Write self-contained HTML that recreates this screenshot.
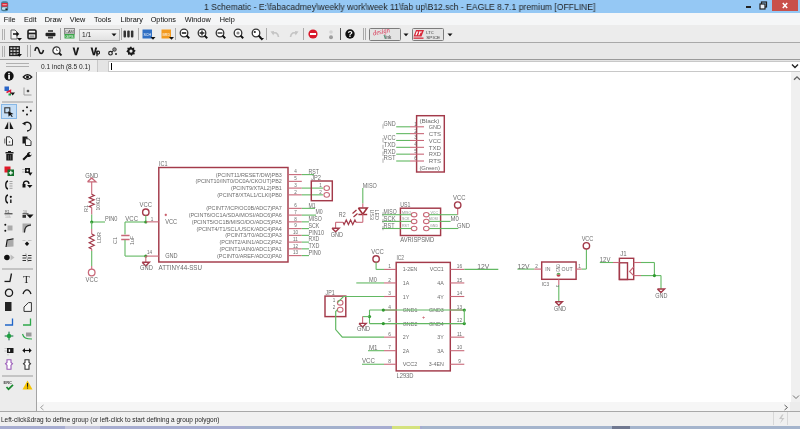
<!DOCTYPE html>
<html><head><meta charset="utf-8">
<style>
*{margin:0;padding:0;box-sizing:border-box}
html,body{width:800px;height:429px;overflow:hidden;background:#fff;font-family:"Liberation Sans",sans-serif}
.abs{will-change:transform}
svg{display:block}
.abs{position:absolute}
#title{left:0;top:0;width:800px;height:13px;background:#95c8f4}
#title .t{left:204px;top:1.8px;font-size:9.3px;color:#1e1e1e;white-space:nowrap;transform-origin:0 0;transform:scaleX(0.923)}
#close{left:772px;top:0;width:26px;height:11px;background:#c9504a}
#menu{left:0;top:13px;width:800px;height:12px;background:#f5f6f7}
#menu span{position:absolute;top:1.6px;font-size:7.3px;color:#0e0e0e}
#tb1{left:0;top:25px;width:800px;height:18px;background:#ececec;border-bottom:1px solid #a9a9a9}
#tb2{left:0;top:43px;width:800px;height:17px;background:#e8e8e8;border-bottom:1px solid #9a9a9a}
#cmd{left:36px;top:60px;width:764px;height:12px;background:#e4e4e4}
#left{left:0;top:60px;width:36.5px;height:352px;background:#ececec;border-right:1.5px solid #a4a4a4}
#canvas{left:37px;top:72px;width:754px;height:330px;background:#fff}
#vscroll{left:790.6px;top:72px;width:9.4px;height:330px;background:#f0f0f0}
#hscroll{left:37px;top:402px;width:753px;height:10px;background:#f6f6f6}
#corner{left:790px;top:402px;width:10px;height:10px;background:#ececec}
#status{left:0;top:411px;width:800px;height:15px;background:#f0f0f0;border-top:1.5px solid #a8a8a8}
#status .t{left:1px;top:4.3px;font-size:6.46px;color:#262626;white-space:nowrap}
#task{left:0;top:426px;width:800px;height:3px;background:#a6acd0}
</style></head><body>
<div id="title" class="abs">
  <svg class="abs" style="left:0;top:0" width="12" height="13"><rect x="1" y="1.2" width="7.2" height="10" rx="2.2" fill="#4a7f96"/><rect x="1.6" y="3" width="6" height="3.6" fill="#e0283a"/><rect x="2.5" y="4.2" width="4.2" height="1" fill="#f4b0b0"/><rect x="2" y="7.2" width="5.2" height="2.6" rx="1" fill="#bfe6f4"/><rect x="5.4" y="8.4" width="2" height="1.6" fill="#1a1a1a"/></svg>
  <div class="abs t">1 Schematic - E:\fabacadmey\weekly work\week 11\fab up\B12.sch - EAGLE 8.7.1 premium [OFFLINE]</div>
  <div class="abs" style="left:746px;top:6px;width:5px;height:1.5px;background:#222"></div>
  <svg class="abs" style="left:759px;top:1px" width="9" height="9"><rect x="2.5" y="1" width="5" height="5" fill="none" stroke="#222" stroke-width="1.2"/><rect x="1" y="3" width="5" height="5" fill="#e8f0f8" stroke="#222" stroke-width="1.2"/></svg>
  <div id="close" class="abs"><svg width="26" height="11"><path d="M10.8 3 L15.2 8 M15.2 3 L10.8 8" stroke="#fff" stroke-width="1.5"/></svg></div>
</div>
<div id="menu" class="abs">
  <span style="left:3.8px">File</span><span style="left:24px">Edit</span><span style="left:44.7px">Draw</span><span style="left:69.7px">View</span><span style="left:94px">Tools</span><span style="left:120.6px">Library</span><span style="left:150.7px">Options</span><span style="left:184.8px">Window</span><span style="left:219.8px">Help</span>
</div>
<div id="tb1" class="abs"><div class="abs" style="left:2px;top:3.5px;width:1px;height:11px;background:#b0b0b0"></div><div class="abs" style="left:4px;top:3.5px;width:1px;height:11px;background:#b0b0b0"></div><svg class="abs" style="left:10px;top:3.5px" width="13" height="12" viewBox="0 0 13 12"><path d="M1 1 H5 L7 3 V10 H1 Z" fill="#f6f6f6" stroke="#666" stroke-width="1"/><path d="M3 4.2 H6.5 V2.5 L9.3 5 L6.5 7.5 V5.8 H3Z" fill="#111"/><path d="M7 9 H12 L9.5 11.8Z" fill="#111"/></svg><svg class="abs" style="left:27px;top:3.5px" width="10" height="11" viewBox="0 0 10 11"><rect x="1" y="1" width="8" height="8.6" rx="1.2" fill="#fff" stroke="#1e1e1e" stroke-width="1.6"/><rect x="1" y="3.6" width="8" height="1.8" fill="#1e1e1e"/><rect x="2.6" y="6.3" width="4.8" height="2.4" fill="#9a9a9a"/></svg><svg class="abs" style="left:45px;top:4px" width="11" height="10" viewBox="0 0 11 10"><rect x="3" y="1" width="5" height="2" fill="#555"/><rect x="0.5" y="3.8" width="10" height="3.4" rx="1" fill="#222"/><rect x="3" y="7.5" width="5" height="2" fill="#444"/></svg><div class="abs" style="left:60px;top:3px;width:1px;height:12px;background:#aaa"></div><svg class="abs" style="left:64px;top:3px" width="11" height="11" viewBox="0 0 11 11"><rect x="0.5" y="0.5" width="10" height="5.5" fill="#dcdcdc" stroke="#777" stroke-width="0.8"/><text x="5.5" y="5" font-size="4" fill="#444" text-anchor="middle" font-family="Liberation Sans">CAM</text><rect x="0.5" y="6" width="10" height="4.5" fill="#3aa548"/><text x="5.5" y="9.8" font-size="3.8" fill="#fff" text-anchor="middle" font-family="Liberation Sans">GPS</text></svg><div class="abs" style="left:78.5px;top:3.5px;width:41px;height:11.5px;background:linear-gradient(#f4f4f4,#e2e2e2);border:1px solid #b4b4b4"></div><div class="abs" style="left:81.5px;top:6px;font-size:6.6px;color:#222">1/1</div><svg class="abs" style="left:111px;top:8px" width="6" height="4" viewBox="0 0 6 4"><path d="M0.5 0.5 H5.5 L3 3.2Z" fill="#111"/></svg><div class="abs" style="left:121px;top:3px;width:1px;height:12px;background:#aaa"></div><svg class="abs" style="left:123px;top:5px" width="11" height="8" viewBox="0 0 11 8"><rect x="0.5" y="0.5" width="2.5" height="7" rx="1" fill="#333"/><rect x="4.2" y="0.5" width="2.5" height="7" rx="1" fill="#333"/><rect x="7.9" y="0.5" width="2.5" height="7" rx="1" fill="#333"/></svg><div class="abs" style="left:138px;top:3px;width:1px;height:12px;background:#aaa"></div><svg class="abs" style="left:142px;top:3.5px" width="14" height="11" viewBox="0 0 14 11"><rect x="0.5" y="0.5" width="9.5" height="9" fill="#2f6fc4"/><text x="5.2" y="6.5" font-size="3.6" fill="#fff" text-anchor="middle" font-family="Liberation Sans">SCH</text><path d="M8.5 8 H13.5 L11 10.8Z" fill="#111"/></svg><svg class="abs" style="left:160.5px;top:3.5px" width="14" height="11" viewBox="0 0 14 11"><rect x="0.5" y="0.5" width="9.5" height="9" fill="#f39a1e"/><text x="5.2" y="6.5" font-size="3.6" fill="#fff" text-anchor="middle" font-family="Liberation Sans">BRD</text><path d="M8 8 H13 L10.5 10.8Z" fill="#111"/></svg><div class="abs" style="left:175px;top:3px;width:1px;height:12px;background:#aaa"></div><svg class="abs" style="left:178.5px;top:3px" width="14" height="13" viewBox="0 0 14 13"><circle cx="5" cy="5" r="3.8" fill="#fff" stroke="#333" stroke-width="1.3"/><path d="M7.6 7.6 L10.2 10.2" stroke="#111" stroke-width="2"/><rect x="2.8" y="4.2" width="4.4" height="1.6" fill="#222"/></svg><svg class="abs" style="left:196.5px;top:3px" width="14" height="13" viewBox="0 0 14 13"><circle cx="5" cy="5" r="3.8" fill="#fff" stroke="#333" stroke-width="1.3"/><path d="M7.6 7.6 L10.2 10.2" stroke="#111" stroke-width="2"/><path d="M2.6 5 H7.4 M5 2.6 V7.4" stroke="#222" stroke-width="1.3"/></svg><svg class="abs" style="left:214.5px;top:3px" width="14" height="13" viewBox="0 0 14 13"><circle cx="5" cy="5" r="3.8" fill="#fff" stroke="#333" stroke-width="1.3"/><path d="M7.6 7.6 L10.2 10.2" stroke="#111" stroke-width="2"/><path d="M2.6 5 H7.4" stroke="#222" stroke-width="1.3"/></svg><svg class="abs" style="left:232.5px;top:3px" width="14" height="13" viewBox="0 0 14 13"><circle cx="5" cy="5" r="3.8" fill="#fff" stroke="#333" stroke-width="1.3"/><path d="M7.6 7.6 L10.2 10.2" stroke="#111" stroke-width="2"/><circle cx="5" cy="5" r="1.6" fill="#888"/></svg><svg class="abs" style="left:250.5px;top:3px" width="14" height="13" viewBox="0 0 14 13"><circle cx="5" cy="5" r="3.8" fill="#fff" stroke="#333" stroke-width="1.3"/><path d="M7.6 7.6 L10.2 10.2" stroke="#111" stroke-width="2"/><circle cx="3.8" cy="4" r="1.1" fill="#222"/><path d="M8.5 10 H13 L10.8 12.5Z" fill="#111"/></svg><div class="abs" style="left:266px;top:3px;width:1px;height:12px;background:#aaa"></div><svg class="abs" style="left:270px;top:4px" width="10" height="9" viewBox="0 0 10 9"><path d="M8.5 8 C8 3.5 5 3 2.5 4.5" fill="none" stroke="#c4c4c4" stroke-width="1.6"/><path d="M0.5 2.5 L4 2 L3.5 6.5Z" fill="#c4c4c4"/></svg><svg class="abs" style="left:289px;top:4px" width="10" height="9" viewBox="0 0 10 9"><path d="M1.5 8 C2 3.5 5 3 7.5 4.5" fill="none" stroke="#c4c4c4" stroke-width="1.6"/><path d="M9.5 2.5 L6 2 L6.5 6.5Z" fill="#c4c4c4"/></svg><div class="abs" style="left:303px;top:3px;width:1px;height:12px;background:#aaa"></div><svg class="abs" style="left:307.5px;top:3.5px" width="10" height="10" viewBox="0 0 10 10"><circle cx="5" cy="5" r="4.6" fill="#d9182a"/><rect x="2" y="4" width="6" height="2" fill="#fff"/></svg><svg class="abs" style="left:328px;top:3.5px" width="6" height="11" viewBox="0 0 6 11"><circle cx="3" cy="3" r="1.8" fill="#d4d4d4"/><circle cx="3" cy="8.2" r="2" fill="#9e9e9e"/></svg><div class="abs" style="left:340px;top:3px;width:1px;height:12px;background:#555"></div><svg class="abs" style="left:345px;top:3.8px" width="10" height="10" viewBox="0 0 10 10"><circle cx="5" cy="5" r="4.7" fill="#111"/><text x="5" y="8.3" font-size="8.6" font-weight="bold" fill="#fff" text-anchor="middle" font-family="Liberation Sans">?</text></svg><div class="abs" style="left:363px;top:3px;width:1px;height:12px;background:#aaa"></div><div class="abs" style="left:365px;top:3px;width:1px;height:12px;background:#aaa"></div><div class="abs" style="left:368.5px;top:2.5px;width:32px;height:13px;background:#e4e4e4;border:1px solid #7c7c7c;border-radius:1.5px"></div><svg class="abs" style="left:369px;top:3px" width="31" height="12" viewBox="0 0 31 12"><text x="4.5" y="7.5" font-size="7" font-style="italic" fill="#d83050" font-family="Liberation Serif" transform="rotate(-12 4.5 7.5)" textLength="17" lengthAdjust="spacingAndGlyphs">design</text><text x="15.5" y="10.6" font-size="4.6" fill="#333" font-family="Liberation Sans">link</text><path d="M15 7 L16.5 10.6" stroke="#2a8a60" stroke-width="0.8"/></svg><svg class="abs" style="left:403px;top:8px" width="6" height="4" viewBox="0 0 6 4"><path d="M0.5 0.5 H5.5 L3 3.2Z" fill="#111"/></svg><div class="abs" style="left:411.5px;top:2.5px;width:32px;height:13px;background:#e4e4e4;border:1px solid #7c7c7c;border-radius:1.5px"></div><svg class="abs" style="left:413px;top:3.5px" width="30" height="11" viewBox="0 0 30 11"><path d="M3 1 H11 L8.5 7.6 H0.5 Z" fill="#d8283a"/><path d="M3.6 2.6 H5.2 L3.6 6.2 H2.4Z M6.2 2.6 H9 L8.6 3.6 H7.6 L6.4 6.2 H5.2 L6.3 3.6 H5.8Z" fill="#fff"/><rect x="0.5" y="8.5" width="10" height="1.3" fill="#d8283a"/><text x="13.2" y="5.2" font-size="3.8" fill="#3a3a3a" font-family="Liberation Sans" textLength="7.5" lengthAdjust="spacingAndGlyphs">LTC</text><text x="13.2" y="9.6" font-size="3.8" fill="#3a3a3a" font-family="Liberation Sans" textLength="14" lengthAdjust="spacingAndGlyphs">SPICE</text></svg><svg class="abs" style="left:446.5px;top:8px" width="6" height="4" viewBox="0 0 6 4"><path d="M0.5 0.5 H5.5 L3 3.2Z" fill="#111"/></svg></div>
<div id="tb2" class="abs"><div class="abs" style="left:0;top:-1px;width:800px;height:17px"><div class="abs" style="left:2px;top:3.5px;width:1px;height:11px;background:#b0b0b0"></div><div class="abs" style="left:4px;top:3.5px;width:1px;height:11px;background:#b0b0b0"></div><svg class="abs" style="left:9px;top:3.5px" width="14" height="11" viewBox="0 0 14 11"><rect x="0.7" y="0.7" width="9.6" height="8.8" fill="#c8c8c8" stroke="#222" stroke-width="1.3"/><path d="M3.9 0.5 V9.5 M7.1 0.5 V9.5 M0.5 3.6 H10.5 M0.5 6.6 H10.5" stroke="#222" stroke-width="1.1"/><path d="M8 8 H13 L10.5 10.8Z" fill="#111"/></svg><div class="abs" style="left:27px;top:3px;width:1px;height:12px;background:#aaa"></div><div class="abs" style="left:29.5px;top:3px;width:1px;height:12px;background:#aaa"></div><svg class="abs" style="left:34px;top:4px" width="11" height="9" viewBox="0 0 11 9"><path d="M1 5 C1.5 0.5 4 0.5 5 4.5 C6 8.5 8.5 8.5 9.5 4" fill="none" stroke="#1a1a1a" stroke-width="1.5"/></svg><svg class="abs" style="left:52px;top:4px" width="11" height="10" viewBox="0 0 11 10"><circle cx="4.5" cy="4.5" r="3.6" fill="#fff" stroke="#333" stroke-width="1.3"/><path d="M4.5 2.5 V4.5 H6" stroke="#666" stroke-width="0.8" fill="none"/><path d="M7 7 L9.5 9.5" stroke="#111" stroke-width="1.8"/></svg><svg class="abs" style="left:72px;top:4.5px" width="8" height="9" viewBox="0 0 8 9"><path d="M0.6 0.6 H2.6 L3.9 6 L5.2 0.6 H7.2 L4.9 8.2 H2.9Z" fill="#1a1a1a"/></svg><svg class="abs" style="left:89.5px;top:4.5px" width="10" height="10" viewBox="0 0 10 10"><path d="M0.6 0.6 H2.6 L3.9 6 L5.2 0.6 H7.2 L4.9 8.2 H2.9Z" fill="#1a1a1a"/><path d="M7 3.8 V9.2" stroke="#1a1a1a" stroke-width="1.3"/><circle cx="8.1" cy="5.6" r="1.5" fill="none" stroke="#1a1a1a" stroke-width="1.1"/></svg><svg class="abs" style="left:107.5px;top:4.5px" width="10" height="9" viewBox="0 0 10 9"><circle cx="2.5" cy="6.2" r="1.8" fill="none" stroke="#222" stroke-width="1.2"/><circle cx="6.5" cy="2.5" r="1.8" fill="#888" stroke="#333" stroke-width="0.8"/><path d="M3.8 5 L5.3 3.7" stroke="#222" stroke-width="1"/><circle cx="8" cy="7" r="1" fill="#222"/></svg><svg class="abs" style="left:125.5px;top:4px" width="10" height="10" viewBox="0 0 10 10"><path d="M5 0.3 L6.1 1.9 L8.2 1.5 L8.1 3.6 L9.7 4.8 L8.3 6.3 L8.8 8.3 L6.7 8.4 L5.5 10 L4.1 8.5 L2 8.8 L2 6.7 L0.3 5.4 L1.7 3.8 L1.3 1.8 L3.4 1.8Z" fill="#1a1a1a"/><circle cx="5" cy="5.1" r="1.6" fill="#e8e8e8"/></svg></div></div>
<div id="left" class="abs"><div class="abs" style="left:0;top:-1px;width:36px;height:352px"><div class="abs" style="left:6px;top:4px;width:23px;height:1.2px;background:#b0b0b0"></div><div class="abs" style="left:6px;top:6.6px;width:23px;height:1.2px;background:#b0b0b0"></div><svg class="abs" style="left:3.5px;top:12.299999999999997px" width="10" height="10" viewBox="0 0 10 10"><circle cx="5" cy="5" r="4.7" fill="#111"/><rect x="4.2" y="4" width="1.7" height="4.3" fill="#fff"/><circle cx="5" cy="2.6" r="0.9" fill="#fff"/></svg><svg class="abs" style="left:21.5px;top:13.5px" width="11" height="8" viewBox="0 0 11 8"><path d="M0.3 4 Q5.5 -2 10.7 4 Q5.5 10 0.3 4Z" fill="#111"/><path d="M2.2 4 Q5.5 0.6 8.8 4 Q5.5 7.4 2.2 4Z" fill="#f2f2f2"/><circle cx="5.5" cy="4" r="1.5" fill="#111"/></svg><svg class="abs" style="left:3.5px;top:27px" width="12" height="10" viewBox="0 0 12 10"><rect x="0.5" y="0.5" width="4.5" height="4.5" fill="#2a66c8"/><path d="M2.5 6.5 L6.5 4.5 L6.5 8" stroke="#e01a3c" stroke-width="1.4" fill="none"/><path d="M6.5 6.5 L11 6.5 L8.7 9.5Z" fill="#111"/><rect x="4.5" y="7.5" width="2.5" height="2" fill="#1aa050"/></svg><svg class="abs" style="left:22.5px;top:27.5px" width="9" height="9" viewBox="0 0 9 9"><path d="M1 0.5 V8 H8.5" stroke="#999" stroke-width="0.9" fill="none"/><circle cx="5" cy="4" r="1.1" fill="#222"/><path d="M3.3 4 H6.7 M5 2.3 V5.7" stroke="#555" stroke-width="0.5"/></svg><div class="abs" style="left:2px;top:41.5px;width:31px;height:1.5px;background:#c4c4c4"></div><div class="abs" style="left:1px;top:44.5px;width:15.5px;height:15px;background:#c6def5;border:1px solid #86b7e6"></div><svg class="abs" style="left:4px;top:47.5px" width="10" height="10" viewBox="0 0 10 10"><rect x="0.8" y="0.8" width="5" height="5" fill="none" stroke="#333" stroke-width="1.1"/><path d="M4.2 4.2 L9.5 7 L7 7.6 L8.8 9.6 L7.8 10 L6.2 8 L4.6 9.8Z" fill="#111"/></svg><svg class="abs" style="left:21.5px;top:47px" width="10" height="10" viewBox="0 0 10 10"><circle cx="5" cy="1.2" r="1" fill="#111"/><circle cx="1.2" cy="4.8" r="1" fill="#111"/><circle cx="8.8" cy="4.8" r="1" fill="#111"/><circle cx="5" cy="8.6" r="1" fill="#111"/></svg><svg class="abs" style="left:3.5px;top:62px" width="10" height="9" viewBox="0 0 10 9"><path d="M4.2 0.5 L0.5 8 H4.2Z" fill="#1a1a1a"/><path d="M5.8 0.5 L9.5 8 H5.8Z" fill="#1a1a1a"/></svg><svg class="abs" style="left:21.5px;top:61.5px" width="10" height="11" viewBox="0 0 10 11"><path d="M2 3 C4 0 9 1 9 5.5 C9 8.5 6.8 10 5 10" fill="none" stroke="#1a1a1a" stroke-width="1.3"/><path d="M0 2.5 L3.5 0.8 L3.5 4.6Z" fill="#1a1a1a"/></svg><svg class="abs" style="left:4px;top:77px" width="10" height="10" viewBox="0 0 10 10"><path d="M2.5 0.8 H6 L8.5 3.5 V9.2 H2.5Z" fill="#f4f4f4" stroke="#333" stroke-width="1"/><path d="M0.8 2.5 V7.5" stroke="#555" stroke-width="0.9"/><circle cx="5.5" cy="6" r="0.8" fill="#555"/></svg><svg class="abs" style="left:22px;top:77px" width="10" height="10" viewBox="0 0 10 10"><rect x="0.5" y="0.5" width="5" height="7" fill="#1a1a1a"/><path d="M3.5 2.8 H6.5 L9 5.3 V9.5 H3.5Z" fill="#f4f4f4" stroke="#333" stroke-width="1"/></svg><svg class="abs" style="left:4.5px;top:91.5px" width="9" height="10" viewBox="0 0 9 10"><rect x="0.5" y="1" width="8" height="1.5" fill="#1a1a1a"/><rect x="3" y="0" width="3" height="1.2" fill="#1a1a1a"/><rect x="1.3" y="3" width="6.4" height="6.5" fill="#1a1a1a"/><path d="M3.4 4 V8.8 M5.6 4 V8.8" stroke="#777" stroke-width="0.6"/></svg><svg class="abs" style="left:22px;top:92px" width="10" height="10" viewBox="0 0 10 10"><path d="M1.2 8.8 L5.5 4.5" stroke="#111" stroke-width="2.1"/><path d="M5 4.5 C4.5 2 6.5 0.5 8.8 1 L7.2 2.6 L7.8 3.9 L9.2 4.2 L9.8 2.5 C9.9 5 8 6.8 5.5 5.8Z" fill="#111"/></svg><svg class="abs" style="left:3.5px;top:106.5px" width="11" height="11" viewBox="0 0 11 11"><rect x="0.5" y="0.5" width="6" height="6" fill="#e01a2a"/><rect x="3.5" y="3.5" width="6.5" height="6.5" fill="#136f2a"/><path d="M6.8 4.8 V8.8 M4.8 6.8 H8.8" stroke="#fff" stroke-width="1.2"/></svg><svg class="abs" style="left:21.5px;top:107px" width="11" height="11" viewBox="0 0 11 11"><path d="M0 3.5 H3 M0 6 H3" stroke="#999" stroke-width="0.6"/><rect x="3" y="2" width="5" height="5" fill="#1a1a1a"/><circle cx="5.5" cy="4.5" r="1" fill="#fff"/><path d="M6 6.5 H10.5 L8.2 9.8Z" fill="#111"/></svg><svg class="abs" style="left:4px;top:120.5px" width="9" height="10" viewBox="0 0 9 10"><path d="M4 1 C1 1.5 1 8.5 4 9" fill="none" stroke="#111" stroke-width="1.3"/><path d="M5.5 1.5 H8.5 M5.5 3.7 H8.5 M5.5 6 H8.5 M5.5 8.3 H8.5" stroke="#999" stroke-width="0.9"/></svg><svg class="abs" style="left:22px;top:120px" width="11" height="10" viewBox="0 0 11 10"><path d="M1.5 5 C1.5 1.5 6.5 1 7 4.8" fill="none" stroke="#111" stroke-width="1.4"/><rect x="0.5" y="5" width="3" height="3.5" fill="#111"/><path d="M5 6 H10.5 L7.8 9Z" fill="#111"/></svg><svg class="abs" style="left:4px;top:134.5px" width="9" height="10" viewBox="0 0 9 10"><path d="M4 1 C1 1.5 1 8.5 4 9" fill="none" stroke="#111" stroke-width="1.3"/><circle cx="6.8" cy="2.8" r="1.1" fill="#111"/><rect x="6" y="5.5" width="1.6" height="3.5" fill="#333"/></svg><svg class="abs" style="left:4px;top:149.5px" width="10" height="10" viewBox="0 0 10 10"><text x="1" y="3.5" font-size="3.6" fill="#444" font-family="Liberation Sans">R1</text><rect x="0.5" y="4.3" width="8" height="1" fill="#222"/><text x="1" y="9" font-size="3.6" fill="#aaa" font-family="Liberation Sans">10k</text></svg><svg class="abs" style="left:22px;top:149.5px" width="12" height="10" viewBox="0 0 12 10"><text x="1" y="3.5" font-size="3.6" fill="#777" font-family="Liberation Sans">10</text><rect x="0.5" y="4.3" width="6" height="1" fill="#333"/><rect x="0.5" y="6" width="3.5" height="2.8" fill="#333"/><path d="M4.5 5.5 H11.5 L8 9.2Z" fill="#111"/></svg><svg class="abs" style="left:4px;top:164px" width="10" height="10" viewBox="0 0 10 10"><circle cx="1.3" cy="1.8" r="1" fill="#111"/><circle cx="1.3" cy="7.8" r="1" fill="#111"/><rect x="3.5" y="2.5" width="5" height="5" fill="#aaa"/></svg><svg class="abs" style="left:22px;top:164px" width="10" height="10" viewBox="0 0 10 10"><path d="M0.5 0.5 H9 L9 3 C5 3 3 5 3 9.5 H0.5Z" fill="#aaa"/><path d="M9 2 C5 2 2.5 4 2.5 9.5" fill="none" stroke="#222" stroke-width="1.1"/></svg><svg class="abs" style="left:4.5px;top:179px" width="9" height="10" viewBox="0 0 9 10"><path d="M1 9 L2.5 1.8 L8.5 0.8 V8.5 Z" fill="#aaa"/><path d="M1 9 L2.2 2 L8.5 0.8" fill="none" stroke="#111" stroke-width="1.1"/></svg><svg class="abs" style="left:22px;top:180px" width="10" height="9" viewBox="0 0 10 9"><path d="M0.5 1.5 H3.5 M6 1.5 H9.5" stroke="#aaa" stroke-width="0.6"/><path d="M5 2.5 L7.2 4.7 L5 6.9 L2.8 4.7Z" fill="#111"/></svg><svg class="abs" style="left:3.5px;top:194px" width="11" height="9" viewBox="0 0 11 9"><circle cx="3" cy="4.5" r="2.7" fill="#111"/><path d="M0.5 3 L4 4.5 L0.5 6" fill="#111"/><path d="M6.5 1.5 L10.5 4.5 L6.5 7.5Z" fill="#bdbdbd"/></svg><svg class="abs" style="left:22px;top:194px" width="10" height="9" viewBox="0 0 10 9"><path d="M0.5 2.5 H4 M0.5 5 H4 M0.5 7.5 H4 M6 2.5 H9.5 M6 5 H9.5 M6 7.5 H9.5" stroke="#333" stroke-width="1"/><path d="M3.8 0.5 L6 8.8" stroke="#777" stroke-width="0.7"/></svg><div class="abs" style="left:2px;top:208.5px;width:31px;height:1.5px;background:#c4c4c4"></div><svg class="abs" style="left:3.5px;top:214px" width="10" height="10" viewBox="0 0 10 10"><path d="M7.5 0.5 L6 8" stroke="#1a1a1a" stroke-width="1.3"/><rect x="0.5" y="7.8" width="6" height="1.3" fill="#1a1a1a"/></svg><div class="abs" style="left:23.2px;top:213.5px;font-family:'Liberation Serif';font-size:11px;color:#1a1a1a">T</div><svg class="abs" style="left:3.5px;top:228.5px" width="10" height="10" viewBox="0 0 10 10"><circle cx="5" cy="4.8" r="3.6" fill="none" stroke="#1a1a1a" stroke-width="1.3"/></svg><svg class="abs" style="left:21.5px;top:229px" width="10" height="8" viewBox="0 0 10 8"><path d="M1 6 C3 0.5 7 0.5 9 6" fill="none" stroke="#1a1a1a" stroke-width="1.3"/></svg><svg class="abs" style="left:5px;top:243px" width="7" height="9.5" viewBox="0 0 7 9.5"><rect x="0" y="0" width="6.5" height="9" fill="#222"/></svg><svg class="abs" style="left:22.5px;top:243px" width="9" height="10" viewBox="0 0 9 10"><path d="M5.5 0.6 H8.4 V9.4 H1 V5 Z" fill="#f6f6f6" stroke="#333" stroke-width="1"/></svg><svg class="abs" style="left:3.5px;top:259px" width="10" height="9" viewBox="0 0 10 9"><path d="M8.5 0.5 V7 H1" stroke="#1f65c8" stroke-width="1.3" fill="none"/></svg><svg class="abs" style="left:22px;top:259px" width="10" height="9" viewBox="0 0 10 9"><path d="M8.5 0.5 V7 H1" stroke="#2ea84a" stroke-width="1.3" fill="none"/></svg><svg class="abs" style="left:3.5px;top:272px" width="11" height="10" viewBox="0 0 11 10"><path d="M5 0.5 V9.5 M0.5 5 H9.5" stroke="#9a60c0" stroke-width="0.7"/><path d="M5 0.8 V9.2 M0.8 5 H9.2" stroke="#1fa040" stroke-width="1"/><circle cx="5" cy="5" r="2.2" fill="#1fa040"/></svg><svg class="abs" style="left:21.5px;top:273px" width="11" height="9" viewBox="0 0 11 9"><path d="M0.5 2 C1.5 6 4 7 10 7" fill="none" stroke="#2ea84a" stroke-width="1.2"/><rect x="4" y="0.5" width="5.5" height="4" fill="#999"/></svg><svg class="abs" style="left:3.5px;top:287px" width="11" height="10" viewBox="0 0 11 10"><path d="M0.5 2.5 H3 M0.5 5 H3" stroke="#aaa" stroke-width="0.6"/><rect x="3" y="2" width="6.5" height="5" fill="#1a1a1a"/><rect x="4.7" y="3.3" width="1.4" height="2.5" fill="#fff"/><path d="M3 8.8 H5" stroke="#aaa" stroke-width="0.6"/></svg><svg class="abs" style="left:22px;top:288px" width="10" height="7" viewBox="0 0 10 7"><path d="M2 3.5 H8" stroke="#111" stroke-width="1.1"/><path d="M0.3 3.5 L3 1 V6Z M9.7 3.5 L7 1 V6Z" fill="#111"/></svg><svg class="abs" style="left:4px;top:300px" width="10" height="11" viewBox="0 0 10 11"><path d="M3 0.8 H7 V3.5 L8.5 4.8 L7 6.2 V10.2 H3 V6.2 L1.5 4.8 L3 3.5Z" fill="#fff" stroke="#9a5ab8" stroke-width="1.1"/></svg><svg class="abs" style="left:22px;top:300px" width="10" height="11" viewBox="0 0 10 11"><path d="M3 0.8 H7 V3.5 L8.5 4.8 L7 6.2 V10.2 H3 V6.2 L1.5 4.8 L3 3.5Z" fill="#fff" stroke="#333" stroke-width="1.1"/></svg><div class="abs" style="left:2px;top:316px;width:31px;height:1.5px;background:#c4c4c4"></div><svg class="abs" style="left:3px;top:320.5px" width="12" height="11" viewBox="0 0 12 11"><text x="0.5" y="4" font-size="4" font-weight="bold" fill="#444" font-family="Liberation Sans">ERC</text><path d="M3.5 7 L5.5 9.2 L10 4.8" fill="none" stroke="#1a8a30" stroke-width="1.7"/></svg><svg class="abs" style="left:21.5px;top:321px" width="11" height="10" viewBox="0 0 11 10"><path d="M5.5 0.5 L10.5 9.5 H0.5Z" fill="#f6c400"/><rect x="5" y="3" width="1.1" height="3.8" fill="#222"/><rect x="5" y="7.5" width="1.1" height="1.1" fill="#222"/></svg></div></div>
<div id="cmd" class="abs">
  <div class="abs" style="left:0;top:0px;width:62px;height:12px;background:#ececec;border-right:1px solid #c8c8c8"></div>
  <div class="abs" style="left:4.6px;top:2.5px;font-size:6.6px;color:#262626;white-space:nowrap">0.1 inch (8.5 0.1)</div>
  <div class="abs" style="left:71.5px;top:0.5px;width:692.5px;height:11px;background:#fff;border:1px solid #c8c8c8"></div>
  <div class="abs" style="left:74.6px;top:2.5px;width:1px;height:7px;background:#000"></div>
  <svg class="abs" style="left:755px;top:3px" width="8" height="6"><path d="M1 1.5 L4 4.5 L7 1.5" stroke="#222" stroke-width="1.4" fill="none"/></svg>
</div>
<div id="canvas" class="abs"></div>
<div id="vscroll" class="abs"><svg class="abs" style="left:1.5px;top:2.5px" width="8" height="6"><path d="M1 4.8 L4 1.8 L7 4.8" stroke="#606060" stroke-width="1.3" fill="none"/></svg><svg class="abs" style="left:1px;top:322px" width="8" height="6"><path d="M1 1.5 L4 4.5 L7 1.5" stroke="#707070" stroke-width="1" fill="none"/></svg></div>
<div id="hscroll" class="abs"><svg class="abs" style="left:2px;top:2px" width="6" height="7"><path d="M4.5 1 L1.5 3.5 L4.5 6" stroke="#a0a0a0" stroke-width="1" fill="none"/></svg><svg class="abs" style="left:746px;top:2px" width="6" height="7"><path d="M1.5 1 L4.5 3.5 L1.5 6" stroke="#606060" stroke-width="1" fill="none"/></svg></div>
<div id="corner" class="abs"></div>
<svg class="abs" style="left:0;top:0;will-change:transform" width="800" height="429" viewBox="0 0 800 429">
<defs><clipPath id="cc"><rect x="37" y="72" width="754" height="330"/></clipPath></defs>
<g clip-path="url(#cc)" font-family="Liberation Sans, sans-serif">
<text x="91.7" y="177.6" font-size="6.4" fill="#6c6c6c" text-anchor="middle" textLength="13" lengthAdjust="spacingAndGlyphs">GND</text>
<polyline points="87.5,181.8 95.9,181.8 91.7,177.9 87.5,181.8" stroke="#c86878" stroke-width="1.3" fill="none" stroke-linejoin="miter"/>
<line x1="91.7" y1="182" x2="91.7" y2="194.4" stroke="#c86878" stroke-width="1.1"/>
<polyline points="91.7,194.4 94.2,195.49166666666667 89.2,197.675 94.2,199.85833333333335 89.2,202.04166666666666 94.2,204.225 89.2,206.40833333333333 91.7,207.5" stroke="#a33a4a" stroke-width="1.2" fill="none" stroke-linejoin="miter"/>
<line x1="91.7" y1="207.5" x2="91.7" y2="214.6" stroke="#c86878" stroke-width="1.1"/>
<line x1="91.7" y1="214.6" x2="91.7" y2="222" stroke="#62b862" stroke-width="1.1"/>
<text x="88.2" y="208.5" font-size="5.4" fill="#6c6c6c" text-anchor="middle" transform="rotate(-90 88.2 208.5)">R1</text>
<text x="100.3" y="204" font-size="5.2" fill="#6c6c6c" text-anchor="middle" transform="rotate(-90 100.3 204)">10KΩ</text>
<line x1="91.7" y1="222" x2="105" y2="222" stroke="#62b862" stroke-width="1.1"/>
<circle cx="91.7" cy="222" r="1.6" fill="#2f9a2f"/>
<text x="105" y="221.4" font-size="6.4" fill="#6c6c6c" text-anchor="start" textLength="12.5" lengthAdjust="spacingAndGlyphs">PIN0</text>
<line x1="91.7" y1="222" x2="91.7" y2="229" stroke="#62b862" stroke-width="1.1"/>
<line x1="91.7" y1="229" x2="91.7" y2="234" stroke="#c86878" stroke-width="1.1"/>
<polyline points="91.7,234 94.2,235.25 89.2,237.75 94.2,240.25 89.2,242.75 94.2,245.25 89.2,247.75 91.7,249" stroke="#a33a4a" stroke-width="1.2" fill="none" stroke-linejoin="miter"/>
<line x1="91.7" y1="249" x2="91.7" y2="251" stroke="#c86878" stroke-width="1.1"/>
<line x1="91.7" y1="251" x2="91.7" y2="266" stroke="#62b862" stroke-width="1.1"/>
<line x1="91.7" y1="266" x2="91.7" y2="269.3" stroke="#c86878" stroke-width="1.1"/>
<circle cx="91.7" cy="272.5" r="3.3" stroke="#c86878" stroke-width="1.3" fill="none"/>
<text x="91.7" y="282.1" font-size="6.4" fill="#6c6c6c" text-anchor="middle" textLength="12.3" lengthAdjust="spacingAndGlyphs">VCC</text>
<text x="100.5" y="237.5" font-size="5.4" fill="#6c6c6c" text-anchor="middle" transform="rotate(-90 100.5 237.5)">LDR</text>
<circle cx="145.8" cy="212.2" r="3.2" stroke="#a33a4a" stroke-width="1.4" fill="none"/>
<text x="145.8" y="206.7" font-size="6.4" fill="#6c6c6c" text-anchor="middle" textLength="12.5" lengthAdjust="spacingAndGlyphs">VCC</text>
<line x1="145.8" y1="215.5" x2="145.8" y2="222" stroke="#62b862" stroke-width="1.1"/>
<line x1="125" y1="222" x2="145.8" y2="222" stroke="#62b862" stroke-width="1.1"/>
<text x="125.3" y="221" font-size="6.4" fill="#6c6c6c" text-anchor="start" textLength="12.7" lengthAdjust="spacingAndGlyphs">VCC</text>
<circle cx="145.8" cy="222" r="1.6" fill="#2f9a2f"/>
<line x1="125" y1="222" x2="125" y2="234.5" stroke="#62b862" stroke-width="1.1"/>
<line x1="121.2" y1="235.5" x2="129.6" y2="235.5" stroke="#c86878" stroke-width="1.5"/>
<line x1="121.2" y1="239.5" x2="129.6" y2="239.5" stroke="#c86878" stroke-width="1.5"/>
<line x1="125" y1="240" x2="125" y2="256.1" stroke="#62b862" stroke-width="1.1"/>
<line x1="125" y1="256.1" x2="145.8" y2="256.1" stroke="#62b862" stroke-width="1.1"/>
<circle cx="145.8" cy="256.1" r="1.6" fill="#2f9a2f"/>
<line x1="145.8" y1="256.1" x2="145.8" y2="262" stroke="#c86878" stroke-width="1.1"/>
<polyline points="142.20000000000002,262.3 149.4,262.3 145.8,265.90000000000003 142.20000000000002,262.3" stroke="#a33a4a" stroke-width="1.4" fill="none" stroke-linejoin="miter"/>
<text x="146.4" y="269.8" font-size="6.4" fill="#6c6c6c" text-anchor="middle" textLength="12.8" lengthAdjust="spacingAndGlyphs">GND</text>
<text x="117.2" y="240.5" font-size="5.4" fill="#6c6c6c" text-anchor="middle" transform="rotate(-90 117.2 240.5)">C1</text>
<text x="133.5" y="240.5" font-size="5.2" fill="#6c6c6c" text-anchor="middle" transform="rotate(-90 133.5 240.5)">1uF</text>
<rect x="158.8" y="167.5" width="129.2" height="94.5" stroke="#a33a4a" stroke-width="1.45" fill="none"/>
<text x="159" y="165.6" font-size="6.4" fill="#6c6c6c" text-anchor="start" textLength="8.6" lengthAdjust="spacingAndGlyphs">IC1</text>
<text x="158.6" y="269.8" font-size="6.4" fill="#6c6c6c" text-anchor="start" textLength="43.4" lengthAdjust="spacingAndGlyphs">ATTINY44-SSU</text>
<line x1="145.8" y1="221.85" x2="158.8" y2="221.85" stroke="#c86878" stroke-width="1.1"/>
<line x1="145.8" y1="256.1" x2="158.8" y2="256.1" stroke="#c86878" stroke-width="1.1"/>
<text x="152" y="220.5" font-size="4.6" fill="#6c6c6c" text-anchor="middle">1</text>
<text x="149.5" y="254.3" font-size="4.6" fill="#6c6c6c" text-anchor="middle">14</text>
<text x="165.2" y="223.8" font-size="6.3" fill="#6c6c6c" text-anchor="start" textLength="12" lengthAdjust="spacingAndGlyphs">VCC</text>
<text x="165.2" y="257.6" font-size="6.3" fill="#6c6c6c" text-anchor="start" textLength="12.5" lengthAdjust="spacingAndGlyphs">GND</text>
<line x1="164.6" y1="214.9" x2="167" y2="214.9" stroke="#c04050" stroke-width="0.9"/>
<line x1="165.8" y1="213.7" x2="165.8" y2="216.1" stroke="#c04050" stroke-width="0.9"/>
<line x1="288" y1="174.6" x2="301.8" y2="174.6" stroke="#c86878" stroke-width="1.1"/>
<text x="295.5" y="173.4" font-size="4.6" fill="#6c6c6c" text-anchor="middle">4</text>
<text x="281.9" y="176.6" font-size="5.45" fill="#6c6c6c" text-anchor="end">(PCINT11/RESET/DW)PB3</text>
<line x1="288" y1="181.35" x2="301.8" y2="181.35" stroke="#c86878" stroke-width="1.1"/>
<text x="295.5" y="180.15" font-size="4.6" fill="#6c6c6c" text-anchor="middle">5</text>
<text x="281.9" y="183.35" font-size="5.45" fill="#6c6c6c" text-anchor="end">(PCINT10/INT0/OC0A/CKOUT)PB2</text>
<line x1="288" y1="188.1" x2="301.8" y2="188.1" stroke="#c86878" stroke-width="1.1"/>
<text x="295.5" y="186.9" font-size="4.6" fill="#6c6c6c" text-anchor="middle">3</text>
<text x="281.9" y="190.1" font-size="5.45" fill="#6c6c6c" text-anchor="end">(PCINT9/XTAL2)PB1</text>
<line x1="288" y1="194.85" x2="301.8" y2="194.85" stroke="#c86878" stroke-width="1.1"/>
<text x="295.5" y="193.65" font-size="4.6" fill="#6c6c6c" text-anchor="middle">2</text>
<text x="281.9" y="196.85" font-size="5.45" fill="#6c6c6c" text-anchor="end">(PCINT8/XTAL1/CLKI)PB0</text>
<line x1="288" y1="208.35" x2="301.8" y2="208.35" stroke="#c86878" stroke-width="1.1"/>
<text x="295.5" y="207.15" font-size="4.6" fill="#6c6c6c" text-anchor="middle">6</text>
<text x="281.9" y="210.35" font-size="5.45" fill="#6c6c6c" text-anchor="end">(PCINT7/ICP/OC0B/ADC7)PA7</text>
<line x1="288" y1="215.1" x2="301.8" y2="215.1" stroke="#c86878" stroke-width="1.1"/>
<text x="295.5" y="213.9" font-size="4.6" fill="#6c6c6c" text-anchor="middle">7</text>
<text x="281.9" y="217.1" font-size="5.45" fill="#6c6c6c" text-anchor="end">(PCINT6/OC1A/SDA/MOSI/ADC6)PA6</text>
<line x1="288" y1="221.85" x2="301.8" y2="221.85" stroke="#c86878" stroke-width="1.1"/>
<text x="295.5" y="220.65" font-size="4.6" fill="#6c6c6c" text-anchor="middle">8</text>
<text x="281.9" y="223.85" font-size="5.45" fill="#6c6c6c" text-anchor="end">(PCINT5/OC1B/MISO/DO/ADC5)PA5</text>
<line x1="288" y1="228.6" x2="301.8" y2="228.6" stroke="#c86878" stroke-width="1.1"/>
<text x="295.5" y="227.4" font-size="4.6" fill="#6c6c6c" text-anchor="middle">9</text>
<text x="281.9" y="230.6" font-size="5.45" fill="#6c6c6c" text-anchor="end">(PCINT4/T1/SCL/USCK/ADC4)PA4</text>
<line x1="288" y1="235.35" x2="301.8" y2="235.35" stroke="#c86878" stroke-width="1.1"/>
<text x="295.5" y="234.15" font-size="4.6" fill="#6c6c6c" text-anchor="middle">10</text>
<text x="281.9" y="237.35" font-size="5.45" fill="#6c6c6c" text-anchor="end">(PCINT3/T0/ADC3)PA3</text>
<line x1="288" y1="242.1" x2="301.8" y2="242.1" stroke="#c86878" stroke-width="1.1"/>
<text x="295.5" y="240.9" font-size="4.6" fill="#6c6c6c" text-anchor="middle">11</text>
<text x="281.9" y="244.1" font-size="5.45" fill="#6c6c6c" text-anchor="end">(PCINT2/AIN1/ADC2)PA2</text>
<line x1="288" y1="248.85" x2="301.8" y2="248.85" stroke="#c86878" stroke-width="1.1"/>
<text x="295.5" y="247.65" font-size="4.6" fill="#6c6c6c" text-anchor="middle">12</text>
<text x="281.9" y="250.85" font-size="5.45" fill="#6c6c6c" text-anchor="end">(PCINT1/AIN0/ADC1)PA1</text>
<line x1="288" y1="255.6" x2="301.8" y2="255.6" stroke="#c86878" stroke-width="1.1"/>
<text x="295.5" y="254.4" font-size="4.6" fill="#6c6c6c" text-anchor="middle">13</text>
<text x="281.9" y="257.6" font-size="5.45" fill="#6c6c6c" text-anchor="end">(PCINT0/AREF/ADC0)PA0</text>
<line x1="301.8" y1="174.6" x2="314" y2="174.6" stroke="#62b862" stroke-width="1.1"/>
<text x="308.5" y="173.79999999999998" font-size="6.4" fill="#6c6c6c" text-anchor="start" textLength="10.5" lengthAdjust="spacingAndGlyphs">RST</text>
<line x1="301.8" y1="188.1" x2="323" y2="188.1" stroke="#62b862" stroke-width="1.1"/>
<line x1="301.8" y1="194.85" x2="323" y2="194.85" stroke="#62b862" stroke-width="1.1"/>
<line x1="301.8" y1="208.35" x2="315" y2="208.35" stroke="#62b862" stroke-width="1.1"/>
<text x="308.5" y="207.54999999999998" font-size="6.4" fill="#6c6c6c" text-anchor="start" textLength="7.2" lengthAdjust="spacingAndGlyphs">M1</text>
<line x1="301.8" y1="215.1" x2="316" y2="215.1" stroke="#62b862" stroke-width="1.1"/>
<text x="315.5" y="214.29999999999998" font-size="6.4" fill="#6c6c6c" text-anchor="start" textLength="7.2" lengthAdjust="spacingAndGlyphs">M0</text>
<line x1="301.8" y1="221.85" x2="309" y2="221.85" stroke="#62b862" stroke-width="1.1"/>
<text x="308.5" y="221.04999999999998" font-size="6.4" fill="#6c6c6c" text-anchor="start" textLength="13.3" lengthAdjust="spacingAndGlyphs">MISO</text>
<line x1="301.8" y1="228.6" x2="309" y2="228.6" stroke="#62b862" stroke-width="1.1"/>
<text x="308.5" y="227.79999999999998" font-size="6.4" fill="#6c6c6c" text-anchor="start" textLength="10.8" lengthAdjust="spacingAndGlyphs">SCK</text>
<line x1="301.8" y1="235.35" x2="309" y2="235.35" stroke="#62b862" stroke-width="1.1"/>
<text x="308.5" y="234.54999999999998" font-size="6.4" fill="#6c6c6c" text-anchor="start" textLength="15.5" lengthAdjust="spacingAndGlyphs">PIN10</text>
<line x1="301.8" y1="242.1" x2="309" y2="242.1" stroke="#62b862" stroke-width="1.1"/>
<text x="308.5" y="241.29999999999998" font-size="6.4" fill="#6c6c6c" text-anchor="start" textLength="10.8" lengthAdjust="spacingAndGlyphs">RXD</text>
<line x1="301.8" y1="248.85" x2="309" y2="248.85" stroke="#62b862" stroke-width="1.1"/>
<text x="308.5" y="248.04999999999998" font-size="6.4" fill="#6c6c6c" text-anchor="start" textLength="10.8" lengthAdjust="spacingAndGlyphs">TXD</text>
<line x1="301.8" y1="255.6" x2="309" y2="255.6" stroke="#62b862" stroke-width="1.1"/>
<text x="308.5" y="254.79999999999998" font-size="6.4" fill="#6c6c6c" text-anchor="start" textLength="12.5" lengthAdjust="spacingAndGlyphs">PIN0</text>
<rect x="311.3" y="181" width="21.0" height="19.69999999999999" stroke="#a33a4a" stroke-width="1.45" fill="none"/>
<text x="311.3" y="179.7" font-size="6.4" fill="#6c6c6c" text-anchor="start" textLength="9.7" lengthAdjust="spacingAndGlyphs">JP2</text>
<ellipse cx="326.7" cy="188.1" rx="2.8" ry="2.4" stroke="#c86878" stroke-width="1.1" fill="none"/>
<ellipse cx="326.7" cy="194.85" rx="2.8" ry="2.4" stroke="#c86878" stroke-width="1.1" fill="none"/>
<text x="320.5" y="187.1" font-size="4.6" fill="#6c6c6c" text-anchor="middle">1</text>
<text x="320.5" y="193.85" font-size="4.6" fill="#6c6c6c" text-anchor="middle">2</text>
<text x="362.8" y="187.7" font-size="6.4" fill="#6c6c6c" text-anchor="start" textLength="14" lengthAdjust="spacingAndGlyphs">MISO</text>
<line x1="362.8" y1="188" x2="362.8" y2="203.5" stroke="#62b862" stroke-width="1.1"/>
<line x1="362.8" y1="203.5" x2="362.8" y2="207.6" stroke="#c86878" stroke-width="1.1"/>
<polyline points="358.4,208 367.2,208 362.8,214.2 358.4,208" stroke="#a0303c" stroke-width="1.6" fill="none" stroke-linejoin="miter"/>
<line x1="358.4" y1="214.5" x2="367.2" y2="214.5" stroke="#a0303c" stroke-width="1.5"/>
<line x1="362.8" y1="214" x2="362.8" y2="222.3" stroke="#c86878" stroke-width="1.1"/>
<line x1="356" y1="222.3" x2="362.8" y2="222.3" stroke="#c86878" stroke-width="1.1"/>
<polyline points="343,222.3 344.0833333333333,224.60000000000002 346.25,220.0 348.4166666666667,224.60000000000002 350.5833333333333,220.0 352.75,224.60000000000002 354.9166666666667,220.0 356,222.3" stroke="#a33a4a" stroke-width="1.2" fill="none" stroke-linejoin="miter"/>
<line x1="335.6" y1="222.3" x2="343" y2="222.3" stroke="#c86878" stroke-width="1.1"/>
<line x1="335.6" y1="222.3" x2="335.6" y2="228" stroke="#c86878" stroke-width="1.1"/>
<polyline points="332.0,228.2 339.20000000000005,228.2 335.6,231.79999999999998 332.0,228.2" stroke="#a33a4a" stroke-width="1.4" fill="none" stroke-linejoin="miter"/>
<text x="336.8" y="237" font-size="6.4" fill="#6c6c6c" text-anchor="middle" textLength="12.3" lengthAdjust="spacingAndGlyphs">GND</text>
<text x="342.2" y="217" font-size="6.4" fill="#6c6c6c" text-anchor="middle" textLength="6.8" lengthAdjust="spacingAndGlyphs">R2</text>
<line x1="352.5" y1="213.5" x2="356.5" y2="210" stroke="#a0303c" stroke-width="1.2"/>
<line x1="353.5" y1="217" x2="357.5" y2="213.5" stroke="#a0303c" stroke-width="1.2"/>
<text x="369.5" y="214.7" font-size="5.4" fill="#6c6c6c" text-anchor="middle" transform="rotate(90 369.5 214.7)">US3</text>
<text x="374.8" y="214.7" font-size="5.4" fill="#6c6c6c" text-anchor="middle" transform="rotate(90 374.8 214.7)">LED</text>
<rect x="400.4" y="208.2" width="40.200000000000045" height="27.30000000000001" stroke="#a33a4a" stroke-width="1.45" fill="none"/>
<text x="400.2" y="206.7" font-size="6.4" fill="#6c6c6c" text-anchor="start" textLength="10.2" lengthAdjust="spacingAndGlyphs">US1</text>
<text x="400.2" y="242" font-size="6.4" fill="#6c6c6c" text-anchor="start" textLength="34" lengthAdjust="spacingAndGlyphs">AVRISPSMD</text>
<ellipse cx="414.1" cy="214.7" rx="2.8" ry="2.2" stroke="#c86878" stroke-width="1.1" fill="none"/>
<ellipse cx="426.3" cy="214.7" rx="2.8" ry="2.2" stroke="#c86878" stroke-width="1.1" fill="none"/>
<ellipse cx="414.1" cy="221.4" rx="2.8" ry="2.2" stroke="#c86878" stroke-width="1.1" fill="none"/>
<ellipse cx="426.3" cy="221.4" rx="2.8" ry="2.2" stroke="#c86878" stroke-width="1.1" fill="none"/>
<ellipse cx="414.1" cy="228.5" rx="2.8" ry="2.2" stroke="#c86878" stroke-width="1.1" fill="none"/>
<ellipse cx="426.3" cy="228.5" rx="2.8" ry="2.2" stroke="#c86878" stroke-width="1.1" fill="none"/>
<line x1="382" y1="214.7" x2="411.3" y2="214.7" stroke="#62b862" stroke-width="1.1"/>
<text x="383.6" y="214.1" font-size="6.4" fill="#6c6c6c" text-anchor="start" textLength="13" lengthAdjust="spacingAndGlyphs">MISO</text>
<line x1="383" y1="212.2" x2="383" y2="216.5" stroke="#8a8a8a" stroke-width="0.7"/>
<line x1="382" y1="221.4" x2="411.3" y2="221.4" stroke="#62b862" stroke-width="1.1"/>
<text x="383.6" y="220.8" font-size="6.4" fill="#6c6c6c" text-anchor="start" textLength="12" lengthAdjust="spacingAndGlyphs">SCK</text>
<line x1="383" y1="218.9" x2="383" y2="223.20000000000002" stroke="#8a8a8a" stroke-width="0.7"/>
<line x1="382" y1="228.5" x2="411.3" y2="228.5" stroke="#62b862" stroke-width="1.1"/>
<text x="383.6" y="227.9" font-size="6.4" fill="#6c6c6c" text-anchor="start" textLength="11" lengthAdjust="spacingAndGlyphs">RST</text>
<line x1="383" y1="226.0" x2="383" y2="230.3" stroke="#8a8a8a" stroke-width="0.7"/>
<text x="402" y="213.6" font-size="3.6" fill="#909090" text-anchor="start">MISO</text>
<text x="402" y="220.3" font-size="3.6" fill="#909090" text-anchor="start">SCK</text>
<text x="402" y="227.4" font-size="3.6" fill="#909090" text-anchor="start">RST</text>
<text x="438" y="213.6" font-size="3.6" fill="#909090" text-anchor="end">VCC</text>
<text x="438" y="220.3" font-size="3.6" fill="#909090" text-anchor="end">MOSI</text>
<text x="438" y="227.4" font-size="3.6" fill="#909090" text-anchor="end">GND</text>
<line x1="429.1" y1="214.7" x2="457.7" y2="214.7" stroke="#62b862" stroke-width="1.1"/>
<line x1="457.7" y1="214.7" x2="457.7" y2="208.3" stroke="#c86878" stroke-width="1.1"/>
<circle cx="457.7" cy="205.1" r="3.2" stroke="#a33a4a" stroke-width="1.4" fill="none"/>
<text x="459.2" y="199.6" font-size="6.4" fill="#6c6c6c" text-anchor="middle" textLength="12.4" lengthAdjust="spacingAndGlyphs">VCC</text>
<line x1="429.1" y1="221.4" x2="450.6" y2="221.4" stroke="#62b862" stroke-width="1.1"/>
<text x="450.6" y="220.6" font-size="6.4" fill="#6c6c6c" text-anchor="start" textLength="8.4" lengthAdjust="spacingAndGlyphs">M0</text>
<line x1="429.1" y1="228.5" x2="458.3" y2="228.5" stroke="#62b862" stroke-width="1.1"/>
<text x="457" y="227.7" font-size="6.4" fill="#6c6c6c" text-anchor="start" textLength="12.9" lengthAdjust="spacingAndGlyphs">GND</text>
<rect x="416.6" y="115.7" width="27.69999999999999" height="56.3" stroke="#a33a4a" stroke-width="1.45" fill="none"/>
<text x="419.4" y="123.2" font-size="6.0" fill="#6c6c6c" text-anchor="start" textLength="20" lengthAdjust="spacingAndGlyphs">(Black)</text>
<text x="419.4" y="169.7" font-size="6.0" fill="#6c6c6c" text-anchor="start" textLength="20.5" lengthAdjust="spacingAndGlyphs">(Green)</text>
<line x1="396.2" y1="126.8" x2="410" y2="126.8" stroke="#62b862" stroke-width="1.1"/>
<line x1="410" y1="126.8" x2="424" y2="126.8" stroke="#c86878" stroke-width="1.1"/>
<text x="415.5" y="125.8" font-size="4.6" fill="#6c6c6c" text-anchor="middle">1</text>
<text x="428.8" y="129.0" font-size="6.0" fill="#6c6c6c" text-anchor="start" textLength="12.2" lengthAdjust="spacingAndGlyphs">GND</text>
<line x1="396.2" y1="133.64" x2="410" y2="133.64" stroke="#62b862" stroke-width="1.1"/>
<line x1="410" y1="133.64" x2="424" y2="133.64" stroke="#c86878" stroke-width="1.1"/>
<text x="415.5" y="132.64" font-size="4.6" fill="#6c6c6c" text-anchor="middle">2</text>
<text x="428.8" y="135.83999999999997" font-size="6.0" fill="#6c6c6c" text-anchor="start" textLength="12.2" lengthAdjust="spacingAndGlyphs">CTS</text>
<line x1="396.2" y1="140.48" x2="410" y2="140.48" stroke="#62b862" stroke-width="1.1"/>
<line x1="410" y1="140.48" x2="424" y2="140.48" stroke="#c86878" stroke-width="1.1"/>
<text x="415.5" y="139.48" font-size="4.6" fill="#6c6c6c" text-anchor="middle">3</text>
<text x="428.8" y="142.67999999999998" font-size="6.0" fill="#6c6c6c" text-anchor="start" textLength="12.2" lengthAdjust="spacingAndGlyphs">VCC</text>
<line x1="396.2" y1="147.32" x2="410" y2="147.32" stroke="#62b862" stroke-width="1.1"/>
<line x1="410" y1="147.32" x2="424" y2="147.32" stroke="#c86878" stroke-width="1.1"/>
<text x="415.5" y="146.32" font-size="4.6" fill="#6c6c6c" text-anchor="middle">4</text>
<text x="428.8" y="149.51999999999998" font-size="6.0" fill="#6c6c6c" text-anchor="start" textLength="12.2" lengthAdjust="spacingAndGlyphs">TXD</text>
<line x1="396.2" y1="154.16" x2="410" y2="154.16" stroke="#62b862" stroke-width="1.1"/>
<line x1="410" y1="154.16" x2="424" y2="154.16" stroke="#c86878" stroke-width="1.1"/>
<text x="415.5" y="153.16" font-size="4.6" fill="#6c6c6c" text-anchor="middle">5</text>
<text x="428.8" y="156.35999999999999" font-size="6.0" fill="#6c6c6c" text-anchor="start" textLength="12.2" lengthAdjust="spacingAndGlyphs">RXD</text>
<line x1="396.2" y1="161.0" x2="410" y2="161.0" stroke="#62b862" stroke-width="1.1"/>
<line x1="410" y1="161.0" x2="424" y2="161.0" stroke="#c86878" stroke-width="1.1"/>
<text x="415.5" y="160.0" font-size="4.6" fill="#6c6c6c" text-anchor="middle">6</text>
<text x="428.8" y="163.2" font-size="6.0" fill="#6c6c6c" text-anchor="start" textLength="12.2" lengthAdjust="spacingAndGlyphs">RTS</text>
<text x="383.6" y="126.2" font-size="6.4" fill="#6c6c6c" text-anchor="start" textLength="12" lengthAdjust="spacingAndGlyphs">GND</text>
<line x1="383" y1="124.3" x2="383" y2="128.6" stroke="#8a8a8a" stroke-width="0.7"/>
<text x="383.6" y="139.88" font-size="6.4" fill="#6c6c6c" text-anchor="start" textLength="12" lengthAdjust="spacingAndGlyphs">VCC</text>
<line x1="383" y1="137.98" x2="383" y2="142.28" stroke="#8a8a8a" stroke-width="0.7"/>
<text x="383.6" y="146.72" font-size="6.4" fill="#6c6c6c" text-anchor="start" textLength="12" lengthAdjust="spacingAndGlyphs">TXD</text>
<line x1="383" y1="144.82" x2="383" y2="149.12" stroke="#8a8a8a" stroke-width="0.7"/>
<text x="383.6" y="153.56" font-size="6.4" fill="#6c6c6c" text-anchor="start" textLength="12" lengthAdjust="spacingAndGlyphs">RXD</text>
<line x1="383" y1="151.66" x2="383" y2="155.96" stroke="#8a8a8a" stroke-width="0.7"/>
<text x="383.6" y="160.4" font-size="6.4" fill="#6c6c6c" text-anchor="start" textLength="12" lengthAdjust="spacingAndGlyphs">RST</text>
<line x1="383" y1="158.5" x2="383" y2="162.8" stroke="#8a8a8a" stroke-width="0.7"/>
<rect x="396.2" y="262.4" width="54.10000000000002" height="108.5" stroke="#a33a4a" stroke-width="1.45" fill="none"/>
<text x="396.4" y="259.7" font-size="6.4" fill="#6c6c6c" text-anchor="start" textLength="7.6" lengthAdjust="spacingAndGlyphs">IC2</text>
<text x="396.4" y="377.5" font-size="6.4" fill="#6c6c6c" text-anchor="start" textLength="17.2" lengthAdjust="spacingAndGlyphs">L293D</text>
<line x1="384" y1="269.4" x2="396.2" y2="269.4" stroke="#c86878" stroke-width="1.1"/>
<line x1="450.3" y1="269.4" x2="464.3" y2="269.4" stroke="#c86878" stroke-width="1.1"/>
<text x="389.5" y="268.0" font-size="4.8" fill="#6c6c6c" text-anchor="middle">1</text>
<text x="459.5" y="268.0" font-size="4.8" fill="#6c6c6c" text-anchor="middle">16</text>
<text x="402.7" y="271.4" font-size="5.3" fill="#6c6c6c" text-anchor="start" textLength="14.6" lengthAdjust="spacingAndGlyphs">1-2EN</text>
<text x="443.8" y="271.4" font-size="5.3" fill="#6c6c6c" text-anchor="end">VCC1</text>
<line x1="384" y1="282.95" x2="396.2" y2="282.95" stroke="#c86878" stroke-width="1.1"/>
<line x1="450.3" y1="282.95" x2="464.3" y2="282.95" stroke="#c86878" stroke-width="1.1"/>
<text x="389.5" y="281.55" font-size="4.8" fill="#6c6c6c" text-anchor="middle">2</text>
<text x="459.5" y="281.55" font-size="4.8" fill="#6c6c6c" text-anchor="middle">15</text>
<text x="402.7" y="284.95" font-size="5.3" fill="#6c6c6c" text-anchor="start">1A</text>
<text x="443.8" y="284.95" font-size="5.3" fill="#6c6c6c" text-anchor="end">4A</text>
<line x1="384" y1="296.5" x2="396.2" y2="296.5" stroke="#c86878" stroke-width="1.1"/>
<line x1="450.3" y1="296.5" x2="464.3" y2="296.5" stroke="#c86878" stroke-width="1.1"/>
<text x="389.5" y="295.1" font-size="4.8" fill="#6c6c6c" text-anchor="middle">3</text>
<text x="459.5" y="295.1" font-size="4.8" fill="#6c6c6c" text-anchor="middle">14</text>
<text x="402.7" y="298.5" font-size="5.3" fill="#6c6c6c" text-anchor="start">1Y</text>
<text x="443.8" y="298.5" font-size="5.3" fill="#6c6c6c" text-anchor="end">4Y</text>
<line x1="384" y1="310.04999999999995" x2="396.2" y2="310.04999999999995" stroke="#c86878" stroke-width="1.1"/>
<line x1="450.3" y1="310.04999999999995" x2="464.3" y2="310.04999999999995" stroke="#c86878" stroke-width="1.1"/>
<text x="389.5" y="308.65" font-size="4.8" fill="#6c6c6c" text-anchor="middle">4</text>
<text x="459.5" y="308.65" font-size="4.8" fill="#6c6c6c" text-anchor="middle">13</text>
<text x="402.7" y="312.04999999999995" font-size="5.3" fill="#6c6c6c" text-anchor="start">GND1</text>
<text x="443.8" y="312.04999999999995" font-size="5.3" fill="#6c6c6c" text-anchor="end">GND3</text>
<line x1="384" y1="323.59999999999997" x2="396.2" y2="323.59999999999997" stroke="#c86878" stroke-width="1.1"/>
<line x1="450.3" y1="323.59999999999997" x2="464.3" y2="323.59999999999997" stroke="#c86878" stroke-width="1.1"/>
<text x="389.5" y="322.2" font-size="4.8" fill="#6c6c6c" text-anchor="middle">5</text>
<text x="459.5" y="322.2" font-size="4.8" fill="#6c6c6c" text-anchor="middle">12</text>
<text x="402.7" y="325.59999999999997" font-size="5.3" fill="#6c6c6c" text-anchor="start">GND2</text>
<text x="443.8" y="325.59999999999997" font-size="5.3" fill="#6c6c6c" text-anchor="end">GND4</text>
<line x1="384" y1="337.15" x2="396.2" y2="337.15" stroke="#c86878" stroke-width="1.1"/>
<line x1="450.3" y1="337.15" x2="464.3" y2="337.15" stroke="#c86878" stroke-width="1.1"/>
<text x="389.5" y="335.75" font-size="4.8" fill="#6c6c6c" text-anchor="middle">6</text>
<text x="459.5" y="335.75" font-size="4.8" fill="#6c6c6c" text-anchor="middle">11</text>
<text x="402.7" y="339.15" font-size="5.3" fill="#6c6c6c" text-anchor="start">2Y</text>
<text x="443.8" y="339.15" font-size="5.3" fill="#6c6c6c" text-anchor="end">3Y</text>
<line x1="384" y1="350.7" x2="396.2" y2="350.7" stroke="#c86878" stroke-width="1.1"/>
<line x1="450.3" y1="350.7" x2="464.3" y2="350.7" stroke="#c86878" stroke-width="1.1"/>
<text x="389.5" y="349.3" font-size="4.8" fill="#6c6c6c" text-anchor="middle">7</text>
<text x="459.5" y="349.3" font-size="4.8" fill="#6c6c6c" text-anchor="middle">10</text>
<text x="402.7" y="352.7" font-size="5.3" fill="#6c6c6c" text-anchor="start">2A</text>
<text x="443.8" y="352.7" font-size="5.3" fill="#6c6c6c" text-anchor="end">3A</text>
<line x1="384" y1="364.25" x2="396.2" y2="364.25" stroke="#c86878" stroke-width="1.1"/>
<line x1="450.3" y1="364.25" x2="464.3" y2="364.25" stroke="#c86878" stroke-width="1.1"/>
<text x="389.5" y="362.85" font-size="4.8" fill="#6c6c6c" text-anchor="middle">8</text>
<text x="459.5" y="362.85" font-size="4.8" fill="#6c6c6c" text-anchor="middle">9</text>
<text x="402.7" y="366.25" font-size="5.3" fill="#6c6c6c" text-anchor="start" textLength="14.6" lengthAdjust="spacingAndGlyphs">VCC2</text>
<text x="443.8" y="366.25" font-size="5.3" fill="#6c6c6c" text-anchor="end">3-4EN</text>
<text x="423.6" y="318.5" font-size="5.5" fill="#c04050" text-anchor="middle">+</text>
<circle cx="376.1" cy="259" r="3.2" stroke="#a33a4a" stroke-width="1.4" fill="none"/>
<text x="377.5" y="254.1" font-size="6.4" fill="#6c6c6c" text-anchor="middle" textLength="12.6" lengthAdjust="spacingAndGlyphs">VCC</text>
<line x1="376.1" y1="262.2" x2="376.1" y2="269.4" stroke="#62b862" stroke-width="1.1"/>
<line x1="376.1" y1="269.4" x2="384" y2="269.4" stroke="#62b862" stroke-width="1.1"/>
<line x1="356.3" y1="282.95" x2="384" y2="282.95" stroke="#62b862" stroke-width="1.1"/>
<text x="369" y="282.15" font-size="6.4" fill="#6c6c6c" text-anchor="start" textLength="7.8" lengthAdjust="spacingAndGlyphs">M0</text>
<line x1="369.5" y1="310.04999999999995" x2="464.3" y2="310.04999999999995" stroke="#62b862" stroke-width="1.1"/>
<circle cx="383.3" cy="310.04999999999995" r="1.6" fill="#2f9a2f"/>
<circle cx="464.3" cy="310.04999999999995" r="1.6" fill="#2f9a2f"/>
<line x1="369.5" y1="323.59999999999997" x2="464.3" y2="323.59999999999997" stroke="#62b862" stroke-width="1.1"/>
<circle cx="383.3" cy="323.59999999999997" r="1.6" fill="#2f9a2f"/>
<circle cx="464.3" cy="323.59999999999997" r="1.6" fill="#2f9a2f"/>
<line x1="464.3" y1="310.04999999999995" x2="464.3" y2="323.59999999999997" stroke="#62b862" stroke-width="1.1"/>
<line x1="369.5" y1="310.04999999999995" x2="369.5" y2="323.59999999999997" stroke="#62b862" stroke-width="1.1"/>
<circle cx="369.5" cy="316.6" r="1.6" fill="#2f9a2f"/>
<line x1="362.6" y1="316.6" x2="369.5" y2="316.6" stroke="#62b862" stroke-width="1.1"/>
<line x1="362.6" y1="316.6" x2="362.6" y2="323.4" stroke="#c86878" stroke-width="1.1"/>
<polyline points="359.0,323.4 366.20000000000005,323.4 362.6,327.0 359.0,323.4" stroke="#a33a4a" stroke-width="1.4" fill="none" stroke-linejoin="miter"/>
<text x="363.6" y="331" font-size="6.4" fill="#6c6c6c" text-anchor="middle" textLength="13" lengthAdjust="spacingAndGlyphs">GND</text>
<rect x="325" y="296.1" width="20.80000000000001" height="20.5" stroke="#a33a4a" stroke-width="1.45" fill="none"/>
<text x="325.5" y="294.7" font-size="6.4" fill="#6c6c6c" text-anchor="start" textLength="9.1" lengthAdjust="spacingAndGlyphs">JP1</text>
<ellipse cx="340.2" cy="302.7" rx="2.8" ry="2.4" stroke="#c86878" stroke-width="1.1" fill="none"/>
<ellipse cx="340.2" cy="309.7" rx="2.8" ry="2.4" stroke="#c86878" stroke-width="1.1" fill="none"/>
<text x="334" y="301.5" font-size="4.6" fill="#6c6c6c" text-anchor="middle">1</text>
<text x="334" y="308.5" font-size="4.6" fill="#6c6c6c" text-anchor="middle">2</text>
<polyline points="337.5,302.7 343.5,296.5 384,296.5" stroke="#62b862" stroke-width="1.2" fill="none" stroke-linejoin="miter"/>
<polyline points="337.5,309.7 335.7,311.5 335.7,329.6 342.3,337.15 384,337.15" stroke="#62b862" stroke-width="1.2" fill="none" stroke-linejoin="miter"/>
<line x1="368" y1="350.7" x2="384" y2="350.7" stroke="#62b862" stroke-width="1.1"/>
<text x="368.9" y="349.9" font-size="6.4" fill="#6c6c6c" text-anchor="start" textLength="8.7" lengthAdjust="spacingAndGlyphs">M1</text>
<line x1="362" y1="364.25" x2="384" y2="364.25" stroke="#62b862" stroke-width="1.1"/>
<text x="361.9" y="363.45" font-size="6.4" fill="#6c6c6c" text-anchor="start" textLength="13" lengthAdjust="spacingAndGlyphs">VCC</text>
<line x1="464.3" y1="269.4" x2="498.3" y2="269.4" stroke="#62b862" stroke-width="1.1"/>
<text x="477.3" y="269.0" font-size="6.4" fill="#6c6c6c" text-anchor="start" textLength="12" lengthAdjust="spacingAndGlyphs">12V</text>
<rect x="541.7" y="262" width="34.39999999999998" height="17.30000000000001" stroke="#a33a4a" stroke-width="1.45" fill="none"/>
<line x1="517.4" y1="269.1" x2="534.2" y2="269.1" stroke="#62b862" stroke-width="1.1"/>
<line x1="534.2" y1="269.1" x2="541.7" y2="269.1" stroke="#c86878" stroke-width="1.1"/>
<text x="517.6" y="268.6" font-size="6.4" fill="#6c6c6c" text-anchor="start" textLength="12" lengthAdjust="spacingAndGlyphs">12V</text>
<text x="536.5" y="267.8" font-size="4.6" fill="#6c6c6c" text-anchor="middle">2</text>
<text x="545.2" y="271.2" font-size="6.0" fill="#6c6c6c" text-anchor="start" textLength="5.2" lengthAdjust="spacingAndGlyphs">IN</text>
<text x="561.6" y="271.2" font-size="6.0" fill="#6c6c6c" text-anchor="start" textLength="11" lengthAdjust="spacingAndGlyphs">OUT</text>
<text x="560.3" y="268" font-size="4.8" fill="#6c6c6c" text-anchor="middle" transform="rotate(-90 560.3 268)" textLength="7.5" lengthAdjust="spacingAndGlyphs">GND</text>
<path d="M556.5 274.8 A2 2 0 0 1 560.5 274.8Z" fill="#5aa85a"/><path d="M556.5 274.8 A2 2 0 0 0 560.5 274.8Z" fill="#c04050"/>
<line x1="576.1" y1="269.1" x2="581.7" y2="269.1" stroke="#c86878" stroke-width="1.1"/>
<line x1="581.7" y1="269.1" x2="586.4" y2="269.1" stroke="#62b862" stroke-width="1.1"/>
<line x1="586.4" y1="269.1" x2="586.4" y2="249" stroke="#62b862" stroke-width="1.1"/>
<circle cx="586.4" cy="245.8" r="3.2" stroke="#a33a4a" stroke-width="1.4" fill="none"/>
<text x="587.5" y="241.2" font-size="6.4" fill="#6c6c6c" text-anchor="middle" textLength="11.7" lengthAdjust="spacingAndGlyphs">VCC</text>
<text x="579.5" y="267.8" font-size="4.6" fill="#6c6c6c" text-anchor="middle">1</text>
<line x1="558.8" y1="279.3" x2="558.8" y2="285" stroke="#c86878" stroke-width="1.1"/>
<line x1="558.8" y1="285" x2="558.8" y2="301.7" stroke="#62b862" stroke-width="1.1"/>
<polyline points="555.1999999999999,301.7 562.4,301.7 558.8,305.3 555.1999999999999,301.7" stroke="#a33a4a" stroke-width="1.4" fill="none" stroke-linejoin="miter"/>
<text x="560" y="310.5" font-size="6.4" fill="#6c6c6c" text-anchor="middle" textLength="12" lengthAdjust="spacingAndGlyphs">GND</text>
<text x="541.7" y="286" font-size="4.6" fill="#6c6c6c" text-anchor="start" textLength="7.4" lengthAdjust="spacingAndGlyphs">IC3</text>
<text x="556" y="286" font-size="4.4" fill="#6c6c6c" text-anchor="middle" transform="rotate(90 556 286)">3</text>
<rect x="619.4" y="258.3" width="14.300000000000068" height="21.19999999999999" stroke="#a33a4a" stroke-width="1.4" fill="none"/>
<rect x="619.4" y="262.8" width="8.100000000000023" height="16.69999999999999" stroke="#a33a4a" stroke-width="1.4" fill="none"/>
<polyline points="633.7,267 629.5,271.5 633.7,275.6" stroke="#c86878" stroke-width="1.1" fill="none" stroke-linejoin="miter"/>
<text x="620.2" y="255.5" font-size="6.4" fill="#6c6c6c" text-anchor="start" textLength="6.5" lengthAdjust="spacingAndGlyphs">J1</text>
<line x1="599.8" y1="262.5" x2="613" y2="262.5" stroke="#62b862" stroke-width="1.1"/>
<line x1="613" y1="262.5" x2="619.4" y2="262.5" stroke="#c86878" stroke-width="1.1"/>
<text x="599.8" y="261.6" font-size="6.4" fill="#6c6c6c" text-anchor="start" textLength="10.6" lengthAdjust="spacingAndGlyphs">12V</text>
<line x1="633.7" y1="262.5" x2="641" y2="262.5" stroke="#c86878" stroke-width="1.1"/>
<line x1="641" y1="262.5" x2="654.4" y2="262.5" stroke="#62b862" stroke-width="1.1"/>
<line x1="654.4" y1="262.5" x2="654.4" y2="275.6" stroke="#62b862" stroke-width="1.1"/>
<line x1="633.7" y1="275.6" x2="641" y2="275.6" stroke="#c86878" stroke-width="1.1"/>
<line x1="641" y1="275.6" x2="661" y2="275.6" stroke="#62b862" stroke-width="1.1"/>
<circle cx="654.4" cy="275.6" r="1.6" fill="#2f9a2f"/>
<line x1="661" y1="275.6" x2="661" y2="289" stroke="#62b862" stroke-width="1.1"/>
<polyline points="657.4,289 664.6,289 661,292.6 657.4,289" stroke="#a33a4a" stroke-width="1.4" fill="none" stroke-linejoin="miter"/>
<text x="661.4" y="297.9" font-size="6.4" fill="#6c6c6c" text-anchor="middle" textLength="12.2" lengthAdjust="spacingAndGlyphs">GND</text>
</g></svg>
<div id="status" class="abs">
  <div class="abs t">Left-click&amp;drag to define group (or left-click to start defining a group polygon)</div>
  <div class="abs" style="left:773px;top:0;width:1px;height:13px;background:#d8d8d8"></div>
  <div class="abs" style="left:787px;top:0;width:1px;height:13px;background:#d8d8d8"></div>
  <svg class="abs" style="left:777px;top:2px" width="9" height="10"><path d="M5 0.5 L2 5 L5 5 L3 9.5 L7.5 4 L4.5 4 L6.5 0.5Z" fill="#c8c8c8"/></svg>
</div>
<div id="task" class="abs"><div class="abs" style="left:65px;top:0;width:35px;height:3px;background:#c4c6dc"></div><div class="abs" style="left:245px;top:0;width:110px;height:3px;background:#a2b0cc"></div><div class="abs" style="left:392px;top:0;width:28px;height:3px;background:#d4e27e"></div><div class="abs" style="left:422px;top:0;width:378px;height:3px;background:#a4b4cc"></div><div class="abs" style="left:612px;top:0;width:18px;height:3px;background:#707890"></div></div>
</body></html>
